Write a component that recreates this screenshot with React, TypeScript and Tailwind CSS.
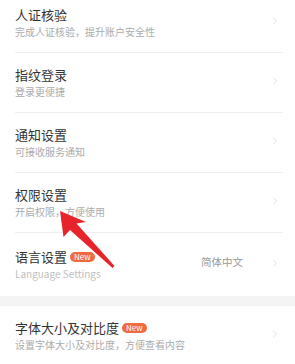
import { ChevronRight } from "lucide-react";

type Item = {
  title: string;
  sub: string;
  badge?: boolean;
  value?: string;
  latin?: boolean;
};

const first: Item[] = [
  { title: "人证核验", sub: "完成人证核验，提升账户安全性" },
  { title: "指纹登录", sub: "登录更便捷" },
  { title: "通知设置", sub: "可接收服务通知" },
  { title: "权限设置", sub: "开启权限，方便使用" },
];

const font = { fontFamily: '"Noto Sans CJK SC", "Noto Sans", sans-serif' };

function Row({ item, last, tall }: { item: Item; last?: boolean; tall?: boolean }) {
  return (
    <div className="pl-[15px] pr-[12px]">
      <div
        className={
          "flex items-center " +
          (tall ? "h-[63px] " : "h-[60px] ") +
          (last ? "" : "border-b border-[#efefef]")
        }
      >
        <div className="flex-1 flex flex-col">
          <div className="flex items-center gap-[3px]">
            <span className="text-[13px] leading-[16px] text-[#333]">{item.title}</span>
            {item.badge && (
              <span className="h-[10px] px-[4px] rounded-full bg-[#f06a40] text-white text-[8px] leading-[10px] flex items-center">
                New
              </span>
            )}
          </div>
          <span
            className={
              "mt-[2px] text-[10px] leading-[14px] " +
              (item.latin ? "text-[#c0c0c0]" : "text-[#ababab]")
            }
          >
            {item.sub}
          </span>
        </div>
        {item.value && (
          <span className="text-[10.5px] text-[#9a9a9a] mr-[26px] -mt-[6px]">{item.value}</span>
        )}
        <ChevronRight size={12} strokeWidth={1.3} className="text-[#cfcfcf] mr-[2px] -mt-[3px]" />
      </div>
    </div>
  );
}

export default function App() {
  return (
    <div className="w-[295px] h-[364px] overflow-hidden bg-white relative" style={font}>
      <div className="-mt-[7px] bg-white">
        {first.map((it) => (
          <Row key={it.title} item={it} />
        ))}
        <Row
          item={{ title: "语言设置", sub: "Language Settings", badge: true, value: "简体中文", latin: true }}
          last
          tall
        />
      </div>
      <div className="h-[10px] bg-[#f4f4f4]" />
      <div className="bg-white">
        <Row
          item={{ title: "字体大小及对比度", sub: "设置字体大小及对比度，方便查看内容", badge: true }}
        />
      </div>

      {/* red pointer arrow */}
      <svg className="absolute left-0 top-0" width="295" height="364" viewBox="0 0 295 364">
        <polygon
          points="60,211 63.5,237 70,230 112.5,268 114.5,266 76.5,223.5 86,222"
          fill="#e8242b"
        />
      </svg>
    </div>
  );
}
